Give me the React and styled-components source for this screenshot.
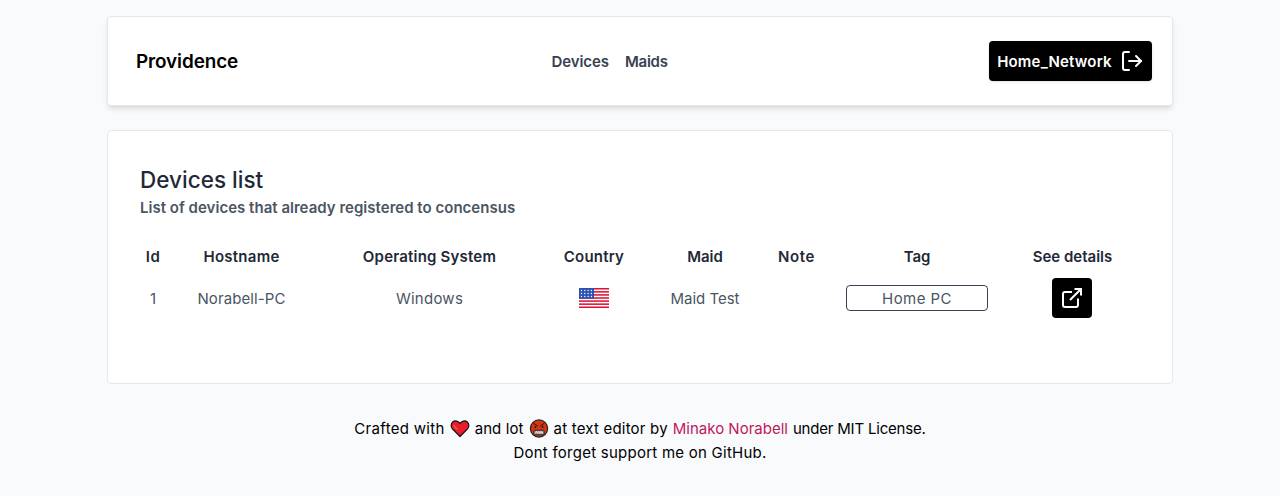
import React from "react";
import styled, { createGlobalStyle } from "styled-components";
import { FiLogOut } from "react-icons/fi";

const GlobalStyle = createGlobalStyle`
  *, *::before, *::after { box-sizing: border-box; }
  body {
    margin: 0;
    background: #f9fafc;
    color: #000;
    font: 400 15px/24px Inter, sans-serif;
  }
`;

const Page = styled.div`
  width: 1066px;
  margin: 0 auto;
  padding-top: 16px;
`;

const Text = styled.span`
  white-space: pre;
  letter-spacing: ${(p) => p.$track || 0}px;
`;

const CenteredText = styled(Text)`
  display: inline-block;
  padding-top: 2px;
`;

const Header = styled.header`
  display: flex;
  align-items: center;
  height: 90px;
  padding: 0 20px 0 28px;
  background: #fff;
  border: 1px solid #e5e7eb;
  border-radius: 4px;
  box-shadow: 0 4px 6px -1px rgba(0, 0, 0, 0.1), 0 2px 4px -2px rgba(0, 0, 0, 0.1);
`;

const Brand = styled(CenteredText)`
  font-size: 18.9px;
  font-weight: 560;
  flex: none;
`;

const Nav = styled.nav`
  display: flex;
  flex: 1;
  justify-content: center;
  gap: 16px;
  padding-right: 8px;
`;

const NavLink = styled(CenteredText).attrs({ as: "a" })`
  color: #374151;
  font-weight: 570;
`;

const Button = styled.button`
  display: inline-flex;
  align-items: center;
  justify-content: center;
  gap: 8px;
  width: ${(p) => p.$width}px;
  height: 40px;
  padding: 0;
  border: 0;
  border-radius: 4px;
  background: #000;
  color: #fff;
  font: inherit;
  font-weight: 570;
  box-shadow: ${(p) => (p.$raised ? "0 1px 3px rgba(0, 0, 0, 0.1), 0 1px 2px -1px rgba(0, 0, 0, 0.1)" : "none")};
  svg { flex: none; }
`;

const Card = styled.main`
  height: 254px;
  margin-top: 24px;
  padding: 33px 32px 32px;
  background: #fff;
  border: 1px solid #e5e7eb;
  border-radius: 4px;
`;

const Title = styled(Text).attrs({ as: "h1" })`
  margin: 0;
  color: #1f2937;
  font-size: 22.5px;
  font-weight: 530;
  line-height: 32px;
`;

const Subtitle = styled(Text).attrs({ as: "p" })`
  margin: 0 0 24px;
  color: #4b5563;
  font-weight: 570;
`;

const Table = styled.table`
  width: 1000px;
  table-layout: fixed;
  border-collapse: collapse;
  text-align: center;
`;

const Th = styled.th`
  width: ${(p) => p.$width}px;
  height: 26px;
  padding: 0;
  color: #1f2937;
  font-weight: 570;
`;

const Td = styled.td`
  height: 56px;
  padding: 0 ${(p) => p.$inset || 0}px;
  color: #4b5563;
  vertical-align: middle;
  svg, button { display: flex; margin: 0 auto; }
`;

const ActionCell = styled(Td)`
  padding-right: 2px;
`;

const Tag = styled.div`
  height: 26px;
  border: 1px solid #374151;
  border-radius: 4px;
  line-height: 25px;
`;

const Footer = styled.footer`
  display: flex;
  flex-direction: column;
  align-items: center;
  margin-top: 33px;
`;

const FooterLine = styled.div`
  display: flex;
  align-items: center;
  gap: 5px;
  height: 24px;
`;

const AuthorLink = styled(Text).attrs({ as: "a" })`
  color: #be185d;
`;

function ExternalIcon() {
  return (
    <svg width="24" height="24" viewBox="0 0 24 24" fill="none" stroke="currentColor" strokeWidth="2">
      <path d="M18 12.500V19a2 2 0 0 1-2 2H5a2 2 0 0 1-2-2V8a2 2 0 0 1 2-2h7" />
      <path d="M14.500 3H21v6.500M10 14 21 3" />
    </svg>
  );
}

function UsFlag() {
  const dots = [];
  for (let y = 0; y < 3; y++) for (let x = 0; x < 4; x++) dots.push([2.5 + x * 3.3, 2.5 + y * 3]);
  return (
    <svg width="30" height="20" viewBox="0 0 30 20">
      <rect width="30" height="20" fill="#fff" />
      {[0, 1, 2, 3, 4, 5, 6].map((i) => (
        <rect key={i} y={(i * 40) / 13} width="30" height={20 / 13} fill="#dc1436" />
      ))}
      <rect width="15" height="10.77" fill="#2e52b2" />
      {dots.map(([x, y]) => (
        <circle key={`${x}-${y}`} cx={x} cy={y} r="0.7" fill="#fff" />
      ))}
    </svg>
  );
}

function Heart() {
  return (
    <svg width="20" height="20" viewBox="0 0 20 20">
      <path
        d="M10 17.500 2.400 9.900C.6 8 .8 4.700 2.700 3c2.200-1.800 5.700-1.200 7.300 1.500C11.600 1.800 15.100 1.200 17.300 3c1.900 1.700 2.100 5 .3 6.900Z"
        fill="#ea1c2c"
        stroke="#111"
        strokeWidth="1.2"
        strokeLinejoin="round"
      />
      <path d="M4 6.300c.4 1.500 1.500 2.700 3 3.700" fill="none" stroke="#ee6a58" strokeWidth="1.200" strokeLinecap="round" />
    </svg>
  );
}

function CursingFace() {
  return (
    <svg width="20" height="20" viewBox="0 0 20 20">
      <circle cx="10" cy="9.500" r="8.600" fill="#d9330f" stroke="#222" strokeWidth="1.200" />
      <path d="m5 4.500 3.400 2.400M15 4.500l-3.400 2.400" stroke="#151515" strokeWidth="1" strokeLinecap="round" />
      <circle cx="6.400" cy="8" r=".9" fill="#151515" />
      <circle cx="13.600" cy="8" r=".9" fill="#151515" />
      <rect x="4.900" y="11.200" width="10.200" height="4.600" rx="1" fill="#8f8f8f" stroke="#202020" strokeWidth=".9" />
      <path d="m6.200 14.600 1.300-2.400 1 2.400 1.300-2.400 1 2.400 1.300-2.400 1 2.400.8-1.800" fill="none" stroke="#eee" strokeWidth=".8" />
    </svg>
  );
}

const columns = [
  { label: "Id", width: 26, track: 0.6 },
  { label: "Hostname", width: 151, track: 0.25 },
  { label: "Operating System", width: 225, track: 0.2 },
  { label: "Country", width: 104, track: 0.2 },
  { label: "Maid", width: 118, track: 0 },
  { label: "Note", width: 65, track: 0.6 },
  { label: "Tag", width: 176, track: -0.1 },
  { label: "See details", width: 135, track: 0 },
];

export default function App() {
  return (
    <>
      <GlobalStyle />
      <Page>
        <Header>
          <Brand $track={-0.1}>Providence</Brand>
          <Nav>
            <NavLink $track={-0.08}>Devices</NavLink>
            <NavLink $track={-0.25}>Maids</NavLink>
          </Nav>
          <Button $width={163} $raised>
            <CenteredText $track={0.2}>Home_Network</CenteredText>
            <FiLogOut size={24} />
          </Button>
        </Header>

        <Card>
          <Title $track={0.02}>Devices list</Title>
          <Subtitle $track={0.02}>List of devices that already registered to concensus</Subtitle>
          <Table>
            <thead>
              <tr>
                {columns.map((c) => (
                  <Th key={c.label} $width={c.width}>
                    <Text $track={c.track}>{c.label}</Text>
                  </Th>
                ))}
              </tr>
            </thead>
            <tbody>
              <tr>
                <Td><CenteredText>1</CenteredText></Td>
                <Td><CenteredText $track={0.1}>Norabell-PC</CenteredText></Td>
                <Td><CenteredText $track={0.25}>Windows</CenteredText></Td>
                <Td><UsFlag /></Td>
                <Td><CenteredText $track={-0.02}>Maid Test</CenteredText></Td>
                <Td />
                <Td $inset={17}>
                  <Tag><Text $track={0.45}>Home PC</Text></Tag>
                </Td>
                <ActionCell>
                  <Button $width={40} aria-label="See details">
                    <ExternalIcon />
                  </Button>
                </ActionCell>
              </tr>
            </tbody>
          </Table>
        </Card>

        <Footer>
          <FooterLine>
            <Text $track={0.3}>Crafted with</Text>
            <Heart />
            <Text $track={0.1}>and lot</Text>
            <CursingFace />
            <Text $track={0.2}>at text editor by</Text>
            <AuthorLink>Minako Norabell</AuthorLink>
            <Text $track={-0.2}>under MIT License.</Text>
          </FooterLine>
          <FooterLine>
            <Text $track={0.25}>Dont forget support me on GitHub.</Text>
          </FooterLine>
        </Footer>
      </Page>
    </>
  );
}
